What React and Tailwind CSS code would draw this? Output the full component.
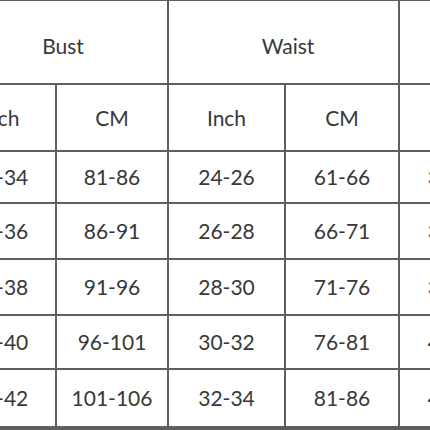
import React from "react";

const rows = [
  ["32-34", "81-86", "24-26", "61-66", "34-36"],
  ["34-36", "86-91", "26-28", "66-71", "36-38"],
  ["36-38", "91-96", "28-30", "71-76", "38-40"],
  ["38-40", "96-101", "30-32", "76-81", "40-42"],
  ["40-42", "101-106", "32-34", "81-86", "42-44"],
];

export default function App() {
  return (
    <div className="w-[430px] h-[430px] overflow-hidden bg-white">
      <div
        className="ml-[-55px] w-[610px] grid grid-cols-[110px_110px_115px_112px_112px_110px] grid-rows-[82px_65px_50px_54px_54px_52px_56px_40px] gap-[2px] pt-[1px] bg-[#5e5e5e] text-[#383838] text-[21px]"
        style={{ fontFamily: "Lato, 'Open Sans', sans-serif" }}
      >
        <div className="col-span-2 bg-white flex items-center justify-center pl-[14px] pt-[8px]">Bust</div>
        <div className="col-span-2 bg-white flex items-center justify-center pl-[9px] pt-[8px]">Waist</div>
        <div className="col-span-2 bg-white flex items-center justify-center pt-[8px]">Hips</div>
        {["Inch", "CM", "Inch", "CM", "Inch", "CM"].map((t, i) => (
          <div key={"h" + i} className="bg-white flex items-center justify-center pt-[1px]">
            {t}
          </div>
        ))}
        {rows.map((r, ri) =>
          [...r, ""].map((v, ci) => (
            <div key={ri + "-" + ci} className="bg-white flex items-center justify-center">
              {v}
            </div>
          ))
        )}
      </div>
    </div>
  );
}
